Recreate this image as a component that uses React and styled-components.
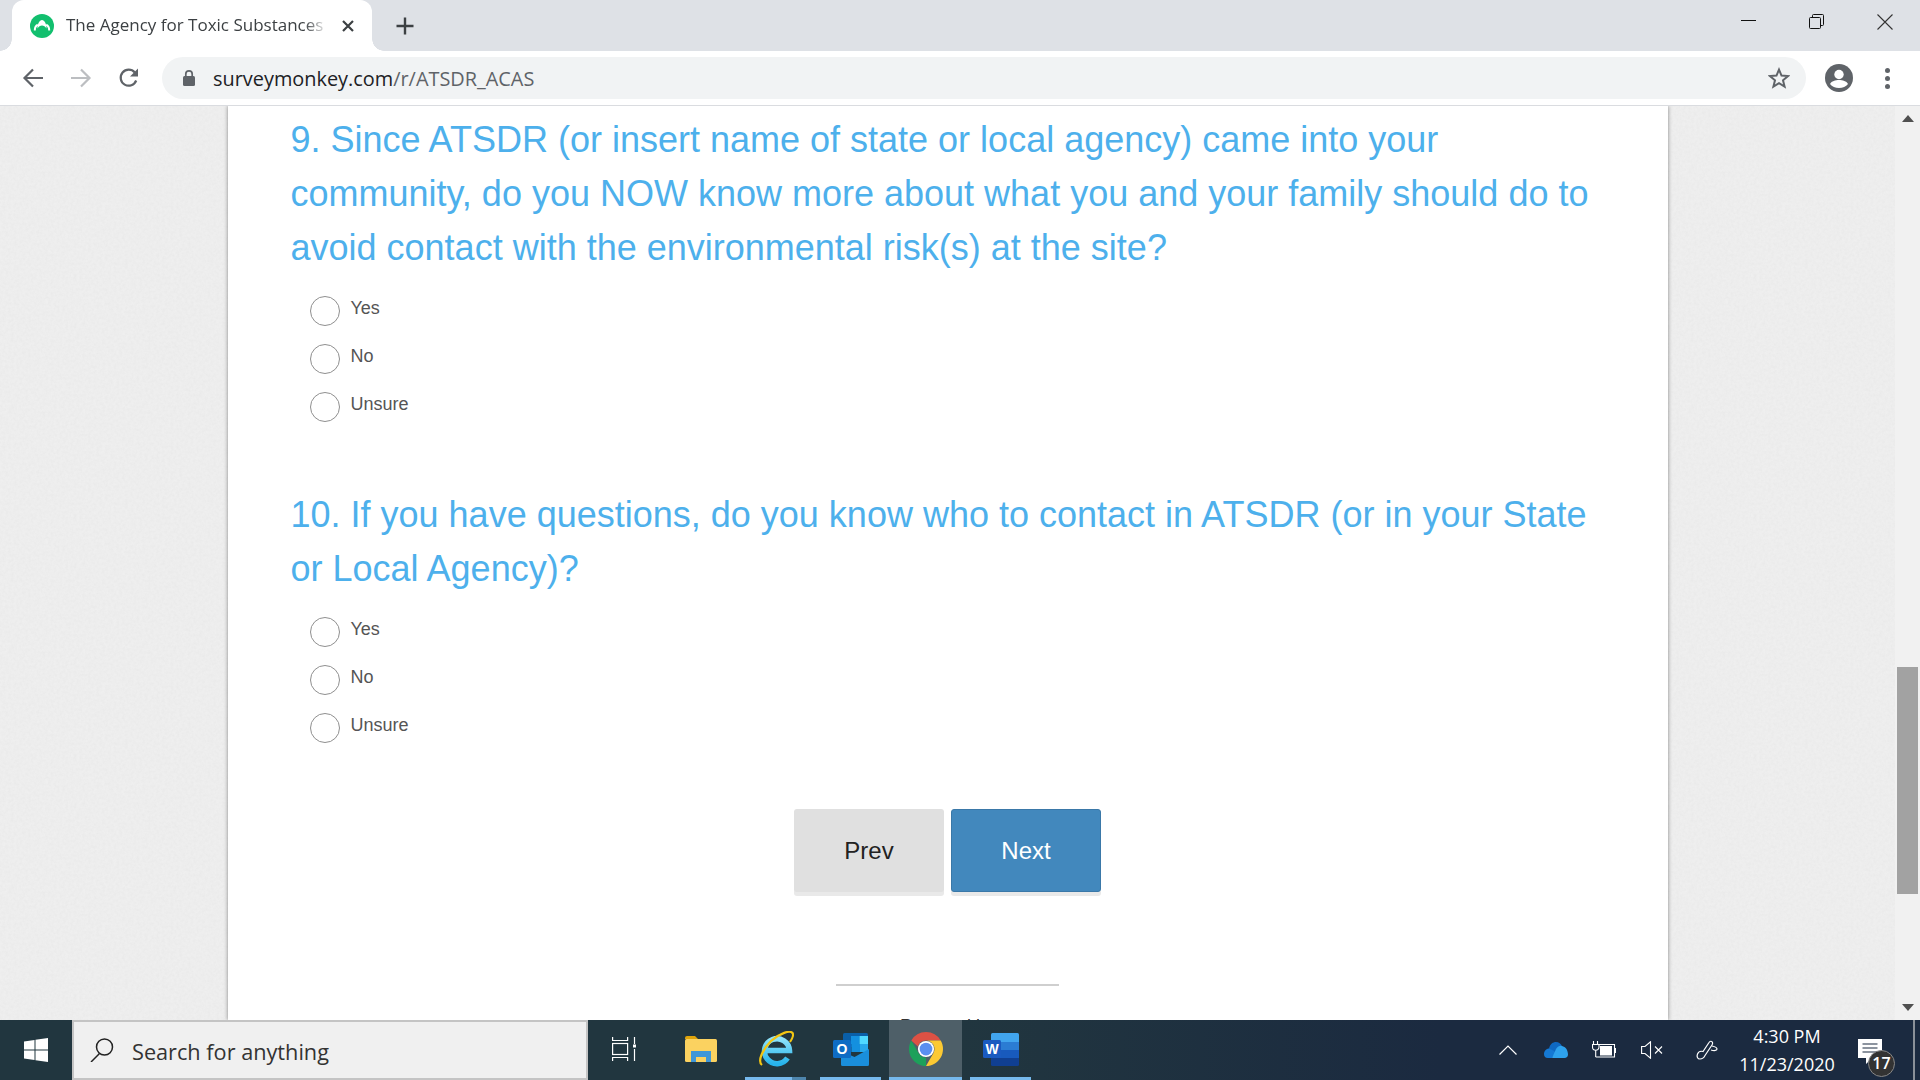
import React from 'react';
import styled, {createGlobalStyle} from 'styled-components';

const GlobalStyle = createGlobalStyle`
html, body {
    margin: 0;
    padding: 0;
    overflow: hidden;
}
* {
    box-sizing: border-box;
}
`;

const noise = `url("data:image/svg+xml,%3Csvg xmlns='http://www.w3.org/2000/svg' width='240' height='240'%3E%3Cfilter id='n'%3E%3CfeTurbulence type='fractalNoise' baseFrequency='0.35' numOctaves='3' stitchTiles='stitch'/%3E%3CfeColorMatrix values='0 0 0 0 0.5 0 0 0 0 0.5 0 0 0 0 0.5 0 0 0 0.12 0'/%3E%3C/filter%3E%3Crect width='240' height='240' filter='url(%23n)'/%3E%3C/svg%3E")`;

function App() {
    return (
        <Screen>
            <GlobalStyle />

            <TabStrip>
                <Tab>
                    <Favicon />
                    <TabTitle>The Agency for Toxic Substances</TabTitle>
                    <CloseIcon />
                </Tab>
                <NewTab><PlusIcon /></NewTab>
                <WindowControls>
                    <WinButton><MinimizeIcon /></WinButton>
                    <WinButton><RestoreIcon /></WinButton>
                    <WinButton><WinCloseIcon /></WinButton>
                </WindowControls>
            </TabStrip>

            <Toolbar>
                <NavButton><BackIcon color="#5f6368" /></NavButton>
                <NavButton><ForwardIcon color="#bcbec1" /></NavButton>
                <NavButton><ReloadIcon /></NavButton>
                <Omnibox>
                    <LockIcon />
                    <Url>surveymonkey.com<UrlPath>/r/ATSDR_ACAS</UrlPath></Url>
                    <StarIcon />
                </Omnibox>
                <AvatarIcon />
                <MenuDots><i /><i /><i /></MenuDots>
            </Toolbar>

            <Viewport>
                <PageArea>
                    <Card>
                        <Question
                            title="9. Since ATSDR (or insert name of state or local agency) came into your community, do you NOW know more about what you and your family should do to avoid contact with the environmental risk(s) at the site?"
                        />
                        <Question
                            title="10. If you have questions, do you know who to contact in ATSDR (or in your State or Local Agency)?"
                            second
                        />
                        <ButtonRow>
                            <PageButton>Prev</PageButton>
                            <PageButton primary>Next</PageButton>
                        </ButtonRow>
                        <Divider />
                        <PoweredBy>Powered by</PoweredBy>
                    </Card>
                </PageArea>
                <Scrollbar>
                    <ScrollArrow><ArrowUp /></ScrollArrow>
                    <ScrollThumb />
                    <ScrollArrow bottom><ArrowDown /></ScrollArrow>
                </Scrollbar>
            </Viewport>

            <Taskbar>
                <StartButton><WindowsIcon /></StartButton>
                <SearchBox>
                    <SearchIcon />
                    <SearchText>Search for anything</SearchText>
                </SearchBox>
                <TaskSlot><TaskViewIcon /></TaskSlot>
                <TaskSlot><FolderIcon /></TaskSlot>
                <TaskSlot running split><IeIcon /></TaskSlot>
                <TaskSlot running><OutlookIcon /></TaskSlot>
                <TaskSlot running active><ChromeIcon /></TaskSlot>
                <TaskSlot running><WordIcon /></TaskSlot>
                <Tray>
                    <TraySlot width={48}><ChevronIcon /></TraySlot>
                    <TraySlot width={48}><OneDriveIcon /></TraySlot>
                    <TraySlot width={48}><BatteryIcon /></TraySlot>
                    <TraySlot width={48}><VolumeIcon /></TraySlot>
                    <TraySlot width={62}><PenIcon /></TraySlot>
                    <Clock>
                        <span>4:30 PM</span>
                        <span>11/23/2020</span>
                    </Clock>
                    <TraySlot width={68}>
                        <Notification>
                            <NotifyIcon />
                            <Badge>17</Badge>
                        </Notification>
                    </TraySlot>
                    <TrayEdge />
                </Tray>
            </Taskbar>
        </Screen>
    );
}
export default App;

function Question({title, second}) {
    return (
        <QuestionBlock second={second}>
            <QuestionTitle>{title}</QuestionTitle>
            {["Yes", "No", "Unsure"].map((option) =>
                <RadioRow key={option}>
                    <RadioCircle />
                    <RadioLabel>{option}</RadioLabel>
                </RadioRow>
            )}
        </QuestionBlock>
    );
}

// chrome icons
function Favicon() {
    return (
        <svg width="24" height="24" viewBox="0 0 24 24" style={{flexShrink: 0}}>
            <circle cx="12" cy="12" r="12" fill="#12bf6e" />
            <path d="M7.500 14.500c0-4.500 2-8.500 4.500-8.500s4.500 4 4.500 8.500c-1-2-2.800-3-4.500-3s-3.500 1-4.500 3z" fill="#fff" />
            <path d="M4.800 16.500c0-3 1-5 3-5.800M19.200 16.500c0-3-1-5-3-5.800" fill="none" stroke="#fff" strokeWidth="2" />
        </svg>
    );
}
function CloseIcon() {
    return (
        <svg width="14" height="14" viewBox="0 0 14 14">
            <path d="M2 2l10 10M12 2L2 12" stroke="#3c4043" strokeWidth="2.200" />
        </svg>
    );
}
function PlusIcon() {
    return (
        <svg width="20" height="20" viewBox="0 0 20 20">
            <path d="M10 1.500v17M1.500 10h17" stroke="#3c4043" strokeWidth="2.400" />
        </svg>
    );
}
function MinimizeIcon() {
    return <svg width="16" height="16" viewBox="0 0 16 16"><path d="M0 6.500h15" stroke="#111" strokeWidth="1" /></svg>;
}
function RestoreIcon() {
    return (
        <svg width="16" height="16" viewBox="0 0 16 16" fill="none" stroke="#111">
            <rect x=".5" y="3.500" width="11" height="11" rx="1" />
            <path d="M3.500 3.500V1.500a1 1 0 0 1 1-1h9a1 1 0 0 1 1 1v9a1 1 0 0 1-1 1h-2" />
        </svg>
    );
}
function WinCloseIcon() {
    return <svg width="16" height="16" viewBox="0 0 16 16"><path d="M.5.5l15 15M15.500.5l-15 15" stroke="#333" strokeWidth="1.100" /></svg>;
}
function BackIcon({color}) {
    return (
        <svg width="22" height="22" viewBox="0 0 22 22" fill="none" stroke={color} strokeWidth="2.200">
            <path d="M21 11H2.500M11 2.500L2.500 11l8.500 8.500" />
        </svg>
    );
}
function ForwardIcon({color}) {
    return (
        <svg width="22" height="22" viewBox="0 0 22 22" fill="none" stroke={color} strokeWidth="2.200">
            <path d="M1 11h18.500M11 2.500l8.500 8.500-8.500 8.500" />
        </svg>
    );
}
function ReloadIcon() {
    return (
        <svg width="22" height="22" viewBox="0 0 22 22" fill="none">
            <path d="M18.200 13.500A8 8 0 1 1 16.800 5.500" stroke="#5f6368" strokeWidth="2.200" />
            <path d="M20 1.500v8h-8z" fill="#5f6368" />
        </svg>
    );
}
function LockIcon() {
    return (
        <svg width="14" height="18" viewBox="0 0 14 18" style={{flexShrink: 0}}>
            <rect x="1" y="7" width="12" height="10" rx="1.500" fill="#5f6368" />
            <path d="M3.800 7.500V5a3.200 3.200 0 0 1 6.400 0v2.500" fill="none" stroke="#5f6368" strokeWidth="1.700" />
        </svg>
    );
}
function StarIcon() {
    return (
        <svg width="22" height="22" viewBox="0 0 22 22" style={{marginLeft: "auto"}}>
            <path d="M11 2.600l2.500 6 6.500.5-5 4.200 1.600 6.300L11 16.200l-5.600 3.400L7 13.300 2 9.100l6.500-.5z" fill="none" stroke="#5f6368" strokeWidth="2" />
        </svg>
    );
}
function AvatarIcon() {
    return (
        <svg width="28" height="28" viewBox="0 0 28 28" style={{marginLeft: "19px"}}>
            <circle cx="14" cy="14" r="14" fill="#5f6368" />
            <circle cx="14" cy="10.500" r="4.700" fill="#fff" />
            <path d="M5 20c1.500-3 5.500-4 9-4s7.500 1 9 4c-2 2.500-5.300 4-9 4s-7-1.500-9-4z" fill="#fff" />
        </svg>
    );
}
function ArrowUp() {
    return <svg width="12" height="7" viewBox="0 0 12 7"><path d="M6 0l6 7H0z" fill="#505050" /></svg>;
}
function ArrowDown() {
    return <svg width="12" height="7" viewBox="0 0 12 7"><path d="M0 0h12L6 7z" fill="#505050" /></svg>;
}

// taskbar icons
function WindowsIcon() {
    return (
        <svg width="24" height="24" viewBox="0 0 24 24">
            <path d="M0 3.400L10.500 2v9.500H0zM11.500 1.800L24 0v11.500H11.500zM0 12.500h10.500V22L0 20.600zM11.500 12.500H24V24l-12.500-1.800z" fill="#fff" />
        </svg>
    );
}
function SearchIcon() {
    return (
        <svg width="24" height="24" viewBox="0 0 24 24" fill="none" stroke="#222" strokeWidth="1.500" style={{flexShrink: 0}}>
            <circle cx="14.500" cy="9" r="8" />
            <path d="M9.500 15.500L1 24" />
        </svg>
    );
}
function TaskViewIcon() {
    return (
        <svg width="24" height="24" viewBox="0 0 24 24" fill="none" stroke="#fff" strokeWidth="1.200" style={{marginLeft: "-3px"}}>
            <path d="M.6 0v3.500h15V0M.6 24v-3.500h15V24" />
            <rect x=".6" y="6.500" width="15" height="11" />
            <path d="M22.500 0v7M22.500 12v12" />
            <rect x="21" y="7.500" width="3" height="3" fill="#fff" stroke="none" />
        </svg>
    );
}
function FolderIcon() {
    return (
        <svg width="32" height="26" viewBox="0 0 32 26">
            <path d="M0 2a2 2 0 0 1 2-2h8l3 3h-13z" fill="#dfa40b" />
            <rect y="3" width="32" height="23" rx="1.500" fill="#fbd260" />
            <path d="M6 26V15h20v11h-5v-5H11v5z" fill="#3f97d8" />
            <rect x="11" y="21" width="10" height="5" fill="#fbd260" />
        </svg>
    );
}
function IeIcon() {
    return (
        <svg width="36" height="36" viewBox="0 0 36 36" fill="none">
            <defs>
                <linearGradient id="ieBlue" x1="0" y1="0" x2="0" y2="1">
                    <stop offset="0" stopColor="#8fe3fa" />
                    <stop offset="1" stopColor="#27b4ec" />
                </linearGradient>
            </defs>
            <path d="M8 19.500H31.500A12.500 12.500 0 1 0 29.500 27" stroke="url(#ieBlue)" strokeWidth="5.500" />
            <path d="M4 34C-1 30 5 18 13 10 22 2 32 -1 34.500 2 36 4 34 8 32 11" stroke="#f2c513" strokeWidth="2.200" />
        </svg>
    );
}
function OutlookIcon() {
    return (
        <svg width="36" height="33" viewBox="0 0 36 33">
            <rect x="10" y="0" width="25" height="14" rx="1.500" fill="#0a5fa8" />
            <rect x="18" y="3" width="8.500" height="8" fill="#1490df" />
            <rect x="26.500" y="3" width="8.500" height="8" fill="#50d9ff" />
            <rect x="10" y="11" width="8.500" height="8" fill="#0a5fa8" />
            <rect x="18.500" y="11" width="8.500" height="8" fill="#1490df" />
            <rect x="27" y="11" width="8" height="8" fill="#28a8ea" />
            <path d="M8 18l13.500 6L36 16v15.500a1.500 1.500 0 0 1-1.500 1.500h-25A1.500 1.500 0 0 1 8 31.500z" fill="#1a8fdc" />
            <rect x="0" y="7" width="18" height="18" rx="1.500" fill="#0f6cc4" />
            <TileLetter x="9" y="21">O</TileLetter>
        </svg>
    );
}
function ChromeIcon() {
    return (
        <svg width="34" height="34" viewBox="4 4 40 40">
            <path d="M24 4a20 20 0 0 1 17.320 10H24a10 10 0 0 0-9.500 7L6.680 14A20 20 0 0 1 24 4z" fill="#dd5144" />
            <path d="M6.680 14l8.660 15a10 10 0 0 0 8.660 5L24 44A20 20 0 0 1 6.680 14z" fill="#1da05a" />
            <path d="M41.320 14A20 20 0 0 1 24 44l8.660-15A10 10 0 0 0 24 14z" fill="#fcc933" />
            <circle cx="24" cy="24" r="9.500" fill="#fff" />
            <circle cx="24" cy="24" r="7.500" fill="#5a8ff0" />
        </svg>
    );
}
function WordIcon() {
    return (
        <svg width="36" height="33" viewBox="0 0 36 33">
            <path d="M8 1.500A1.500 1.500 0 0 1 9.500 0h25A1.500 1.500 0 0 1 36 1.500V9H8z" fill="#41a5ee" />
            <rect x="8" y="9" width="28" height="8" fill="#2b7cd3" />
            <rect x="8" y="17" width="28" height="8" fill="#185abd" />
            <path d="M8 25h28v6.500a1.500 1.500 0 0 1-1.500 1.500h-25A1.500 1.500 0 0 1 8 31.500z" fill="#103f91" />
            <rect x="0" y="7" width="18" height="18" rx="1.500" fill="#1a5ac0" />
            <TileLetter x="9" y="21">W</TileLetter>
        </svg>
    );
}
function ChevronIcon() {
    return (
        <svg width="18" height="10" viewBox="0 0 18 10" fill="none" stroke="#fff" strokeWidth="1.200">
            <path d="M.5 9.500L9 1l8.500 8.500" />
        </svg>
    );
}
function OneDriveIcon() {
    return (
        <svg width="24" height="16" viewBox="0 0 24 16">
            <path d="M5 6.500C6 2 9 0 12 0c2.800 0 5 1.500 6 4.500L10 10z" fill="#0f69c2" />
            <path d="M0 12c0-3 2-5.500 5.500-5.500L12 10l-4 6H3.500C1.500 16 0 14.500 0 12z" fill="#1579d4" />
            <path d="M8 16l4-9c2-3 4-3.500 6-3 3.500.8 6 4 6 8.500 0 2-1.500 3.500-3.500 3.500z" fill="#2ea2ed" />
        </svg>
    );
}
function BatteryIcon() {
    return (
        <svg width="24" height="18" viewBox="0 0 24 18" fill="none" stroke="#fff" strokeWidth="1.100">
            <path d="M7 3.500h15.500v12.500H3.700" />
            <rect x="8" y="5" width="12" height="9.500" fill="#fff" stroke="none" />
            <rect x="23" y="7" width="1" height="5" fill="#fff" stroke="none" />
            <path d="M1.500 0v3.500M5.500 0v3.500M.5 3.500h6.500V6a3 3 0 0 1-6.500 0zM3.700 9v7" />
        </svg>
    );
}
function VolumeIcon() {
    return (
        <svg width="22" height="18" viewBox="0 0 22 18" fill="none" stroke="#fff" strokeWidth="1.100">
            <path d="M.6 5.500h3.400L9.500.8v16.400L4 12.500H.6z" />
            <path d="M14 5.500l7 7M21 5.500l-7 7" />
        </svg>
    );
}
function PenIcon() {
    return (
        <svg width="22" height="20" viewBox="0 0 22 20" fill="none" stroke="#fff" strokeWidth="1.200">
            <path d="M13 2.500c1-1.800 3-1.500 3.500 0 .3 1 0 1.800-.5 2.500L9 15.500c-1 2-3 3.500-5 3.500-2.500 0-3.500-2.500-2.500-5 1-2.300 3-3.200 5.500-2.500z" />
            <path d="M16 6c2.500.5 5 1.500 5 3s-2.500 2-6 1" />
        </svg>
    );
}
function NotifyIcon() {
    return (
        <svg width="24" height="25" viewBox="0 0 24 25">
            <path d="M0 0h24v19h-8l-2 0-6 6v-6H0z" fill="#fff" />
            <path d="M4.500 5h15M4.500 9h15M4.500 13h15" stroke="#1b2a40" strokeWidth="1.100" />
        </svg>
    );
}

const Screen = styled.div`
width: 1920px;
height: 1080px;
display: flex;
flex-direction: column;
overflow: hidden;
font-family: "Liberation Sans", Arial, sans-serif;
`;

const TabStrip = styled.div`
height: 51px;
flex-shrink: 0;
display: flex;
background-color: #dee1e6;
padding-left: 12px;
`;

const Tab = styled.div`
position: relative;
width: 360px;
height: 51px;
display: flex;
align-items: center;
padding-left: 18px;
background-color: #fff;
border-radius: 12px 12px 0 0;
&::before, &::after {
    content: "";
    position: absolute;
    bottom: 0;
    width: 12px;
    height: 12px;
}
&::before {
    left: -12px;
    background: radial-gradient(circle at 0 0, transparent 11.5px, #fff 12px);
}
&::after {
    right: -12px;
    background: radial-gradient(circle at 100% 0, transparent 11.5px, #fff 12px);
}
`;

const TabTitle = styled.div`
width: 262px;
margin: 0 13px 2px 12px;
font-family: "Open Sans", sans-serif;
font-size: 17px;
color: #3c4043;
white-space: nowrap;
overflow: hidden;
-webkit-mask-image: linear-gradient(to right, #000 91%, transparent);
mask-image: linear-gradient(to right, #000 91%, transparent);
`;

const NewTab = styled.div`
display: flex;
align-items: center;
margin-left: 23px;
`;

const WindowControls = styled.div`
display: flex;
margin-left: auto;
padding-top: 14px;
padding-right: 27px;
gap: 52px;
`;

const WinButton = styled.div`
width: 16px;
height: 16px;
`;

const Toolbar = styled.div`
height: 55px;
flex-shrink: 0;
display: flex;
align-items: center;
padding: 0 0 0 22px;
background-color: #fff;
border-bottom: 1px solid #dadce0;
`;

const NavButton = styled.div`
width: 48px;
display: flex;
`;

const Omnibox = styled.div`
width: 1644px;
height: 42px;
margin-left: -4px;
display: flex;
align-items: center;
padding: 0 16px 0 20px;
background-color: #f1f3f4;
border-radius: 21px;
`;

const Url = styled.div`
margin-left: 17px;
font-family: "Open Sans", sans-serif;
font-size: 19.9px;
color: #202124;
`;

const UrlPath = styled.span`
color: #5f6368;
`;

const MenuDots = styled.div`
display: flex;
flex-direction: column;
gap: 3px;
margin-left: 32px;
i {
    display: block;
    width: 5px;
    height: 5px;
    border-radius: 50%;
    background-color: #5f6368;
}
`;

const Viewport = styled.div`
flex: 1;
min-height: 0;
display: flex;
`;

const PageArea = styled.div`
flex: 1;
min-width: 0;
display: flex;
justify-content: center;
background-color: #f0f0f0;
background-image: ${noise};
`;

const Card = styled.div`
width: 1440px;
height: 100%;
padding: 7px 61px 0 63px;
overflow: hidden;
background-color: #fff;
box-shadow: 0 0 4px rgba(0, 0, 0, 0.45);
clip-path: inset(0 -8px);
`;

const QuestionBlock = styled.div`
margin-top: ${(props) => props.second ? "57px" : "0"};
`;

const QuestionTitle = styled.div`
margin-bottom: 12px;
font-size: 36px;
line-height: 54px;
color: #4db0ec;
`;

const RadioRow = styled.div`
height: 48px;
display: flex;
align-items: center;
padding-left: 19px;
`;

const RadioCircle = styled.div`
width: 30px;
height: 30px;
border: 1px solid #8f8f8f;
border-radius: 50%;
background-color: #fff;
`;

const RadioLabel = styled.div`
margin: -6px 0 0 11px;
font-size: 18px;
color: #555;
`;

const ButtonRow = styled.div`
display: flex;
justify-content: center;
gap: 7px;
margin: 57px 0 0 -2px;
`;

const PageButton = styled.div`
width: 150px;
height: 83px;
display: flex;
align-items: center;
justify-content: center;
font-size: 24px;
color: ${(props) => props.primary ? "#fff" : "#222"};
background-color: ${(props) => props.primary ? "#4288bd" : "#e0e0e0"};
border: ${(props) => props.primary ? "1px solid #3a78a8" : "none"};
border-radius: 3px;
box-shadow: 0 4px 0 #e9e9e9;
`;

const Divider = styled.div`
width: 223px;
height: 2px;
margin: 92px auto 0;
position: relative;
left: -1px;
background-color: #cfcfcf;
`;

const PoweredBy = styled.div`
margin: 30px 2px 0 0;
text-align: center;
font-size: 18px;
color: #333;
`;

const Scrollbar = styled.div`
width: 25px;
flex-shrink: 0;
display: flex;
flex-direction: column;
background-color: #f1f1f1;
`;

const ScrollArrow = styled.div`
height: 25px;
display: flex;
align-items: center;
justify-content: center;
margin-top: ${(props) => props.bottom ? "auto" : "0"};
`;

const ScrollThumb = styled.div`
height: 227px;
margin: 536px 2px 0 2px;
background-color: #a2a2a2;
`;

const Taskbar = styled.div`
height: 60px;
flex-shrink: 0;
display: flex;
background: linear-gradient(to right, #21363f 0%, #21363f 50%, #1b2a40 75%, #1b2a40 100%);
`;

const StartButton = styled.div`
width: 72px;
display: flex;
align-items: center;
padding-left: 24px;
`;

const SearchBox = styled.div`
width: 516px;
display: flex;
align-items: center;
padding-left: 16px;
background-color: #f0f0f0;
border: 2px solid #c4c4c4;
`;

const SearchText = styled.div`
margin: 2px 0 0 18px;
font-family: "Open Sans", sans-serif;
font-size: 21.7px;
color: #333;
`;

const TaskSlot = styled.div`
position: relative;
width: ${(props) => props.active ? "73px" : "75px"};
margin: ${(props) => props.active ? "0 1px" : "0"};
display: flex;
align-items: center;
justify-content: center;
padding-bottom: 2px;
background-color: ${(props) => props.active ? "#4e5f68" : "transparent"};
&::after {
    content: "";
    display: ${(props) => props.running ? "block" : "none"};
    position: absolute;
    bottom: 0;
    height: 3px;
    left: ${(props) => props.active ? "0" : "7px"};
    right: ${(props) => props.active ? "0" : "7px"};
    background: ${(props) => props.split ? "linear-gradient(to right, #76b9ed 77%, #4e86ad 77%)" : "#76b9ed"};
}
`;

const TileLetter = styled.text`
font-family: "Liberation Sans", Arial, sans-serif;
font-size: 14px;
font-weight: 700;
fill: #fff;
text-anchor: middle;
`;

const Tray = styled.div`
margin-left: auto;
display: flex;
align-items: stretch;
`;

const TraySlot = styled.div`
width: ${(props) => props.width}px;
display: flex;
align-items: center;
justify-content: center;
padding-bottom: 1px;
`;

const Clock = styled.div`
width: 98px;
display: flex;
flex-direction: column;
align-items: center;
justify-content: center;
gap: 7px;
padding-top: 1px;
font-family: "Open Sans", sans-serif;
font-size: 18px;
line-height: 21px;
color: #fff;
white-space: nowrap;
`;

const Notification = styled.div`
position: relative;
width: 24px;
height: 25px;
margin-top: 3px;
`;

const Badge = styled.div`
position: absolute;
left: 10px;
top: 11px;
width: 27px;
height: 27px;
display: flex;
align-items: center;
justify-content: center;
font-family: "Open Sans", sans-serif;
font-size: 16px;
font-weight: 600;
color: #fff;
background-color: #333;
border: 1px solid #888;
border-radius: 50%;
`;

const TrayEdge = styled.div`
width: 2px;
margin: 0 5px 0 9px;
background-color: #8a9099;
`;
